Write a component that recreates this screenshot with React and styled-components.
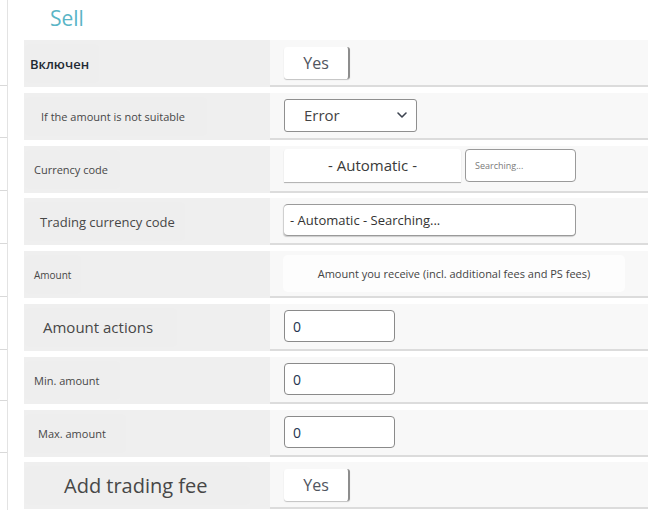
import React from 'react';
import styled, { createGlobalStyle } from 'styled-components';
import { ChevronDown } from 'lucide-react';

const GlobalStyle = createGlobalStyle`
  body {
    margin: 0;
    background: #ffffff;
    font-family: "Open Sans", "Noto Sans", sans-serif;
    color: #444;
  }
`;

const Page = styled.div`
  display: flex;
  width: 648px;
  height: 510px;
  overflow: hidden;
`;

const Rail = styled.div`
  width: 7px;
  flex-shrink: 0;
  border-right: 1px solid #e3e3e3;
  display: flex;
  flex-direction: column;
  margin-right: 16px;
`;

const RailSeg = styled.div`
  height: ${(p) => p.$h}px;
  flex-shrink: 0;
  border-bottom: 1px solid #d9d9d9;
`;

const Main = styled.div`
  flex: 1;
  display: flex;
  flex-direction: column;
`;

const Title = styled.h1`
  margin: 0;
  height: 40px;
  padding-left: 26px;
  font-size: 21px;
  font-weight: 400;
  line-height: 36px;
  color: #5ab5c6;
`;

const Rows = styled.div`
  display: flex;
  flex-direction: column;
  gap: 5.8px;
`;

const Row = styled.div`
  display: grid;
  grid-template-columns: 246px 1fr;
  height: 47px;
`;

const LabelCell = styled.div`
  background: #efefef;
  display: flex;
  align-items: center;
  padding: 4px 0 4px 1px;
`;

const LabelBox = styled.div`
  height: 100%;
  display: flex;
  align-items: center;
  padding: 0 ${(p) => p.$pad}px 0 ${(p) => p.$indent}px;
  background: #eeeeee;
  border-radius: 4px;
  font-size: ${(p) => p.$size}px;
  font-weight: ${(p) => (p.$bold ? 600 : 400)};
  color: ${(p) => (p.$bold ? '#1f2a33' : '#474747')};
  white-space: nowrap;
`;

const ValueCell = styled.div`
  background: #f8f8f8;
  border-bottom: 2px solid #dcdcdc;
  display: flex;
  align-items: center;
  padding-left: ${(p) => p.$pad ?? 14}px;
`;

const Toggle = styled.button`
  width: 66px;
  height: 32px;
  background: #fff;
  border: none;
  border-right: 2px solid #8d8d8d;
  border-radius: 3px;
  box-shadow: 0 1px 1px rgba(0, 0, 0, 0.22);
  font-family: inherit;
  font-size: 16px;
  color: #505560;
  padding: 0;
`;

const Select = styled.div`
  width: 133px;
  height: 33px;
  box-sizing: border-box;
  background: #fff;
  border: 1px solid #8f8f8f;
  border-radius: 3px;
  display: flex;
  align-items: center;
  justify-content: space-between;
  padding: 0 6px 0 19px;
  font-size: 15px;
  color: #444;
`;

const Combo = styled.div`
  display: flex;
  align-items: stretch;
  height: 33px;
  margin-top: ${(p) => p.$top || 0}px;
`;

const ComboMain = styled.div`
  width: 177px;
  background: #fff;
  border-radius: 3px 3px 0 0;
  box-shadow: 0 1px 1px rgba(0, 0, 0, 0.3);
  display: flex;
  align-items: center;
  justify-content: center;
  font-size: 15px;
  color: #3a3a3a;
`;

const ComboSearch = styled.div`
  width: 111px;
  margin-left: 4px;
  box-sizing: border-box;
  background: #fff;
  border: 1px solid #9a9a9a;
  border-radius: 4px;
  display: flex;
  align-items: center;
  padding-left: 9px;
  font-size: 9px;
  color: #7a7a7a;
`;

const Wide = styled.div`
  width: 292px;
  height: 32px;
  box-sizing: border-box;
  background: #fff;
  border: 1px solid #9a9a9a;
  border-left: none;
  border-radius: 4px;
  box-shadow: -1px 1px 1px rgba(0, 0, 0, 0.18);
  display: flex;
  align-items: center;
  padding-left: 6px;
  font-size: 13px;
  color: #333;
  margin-top: -2px;
`;

const Note = styled.div`
  width: 342px;
  height: 37px;
  background: #fdfdfd;
  border-radius: 5px;
  display: flex;
  align-items: center;
  justify-content: center;
  font-size: 11px;
  color: #444;
`;

const NumberInput = styled.div`
  width: 111px;
  height: 32px;
  box-sizing: border-box;
  background: #fff;
  border: 1px solid #8a8a8a;
  border-radius: 4px;
  display: flex;
  align-items: center;
  padding-left: 8px;
  font-size: 14px;
  color: #23344f;
`;

const railSegs = [85, 51, 52, 52, 52, 52, 50, 51];

const labels = [
  { text: 'Включен', size: 13, indent: 5, pad: 10, bold: true },
  { text: 'If the amount is not suitable', size: 11, indent: 16, pad: 22 },
  { text: 'Currency code', size: 11, indent: 9, pad: 12 },
  { text: 'Trading currency code', size: 13, indent: 15, pad: 10 },
  { text: 'Amount', size: 10, indent: 9, pad: 10 },
  { text: 'Amount actions', size: 15, indent: 18, pad: 24 },
  { text: 'Min. amount', size: 11, indent: 9, pad: 20 },
  { text: 'Max. amount', size: 11, indent: 13, pad: 20 },
  { text: 'Add trading fee', size: 20, indent: 39, pad: 42 },
];

const values = [
  <Toggle key="v0">Yes</Toggle>,
  <Select key="v1">
    Error
    <ChevronDown size={16} strokeWidth={2.4} color="#3d4450" />
  </Select>,
  <Combo key="v2" $top={-6}>
    <ComboMain>- Automatic -</ComboMain>
    <ComboSearch>Searching...</ComboSearch>
  </Combo>,
  <Wide key="v3">- Automatic - Searching...</Wide>,
  <Note key="v4">Amount you receive (incl. additional fees and PS fees)</Note>,
  <NumberInput key="v5">0</NumberInput>,
  <NumberInput key="v6">0</NumberInput>,
  <NumberInput key="v7">0</NumberInput>,
  <Toggle key="v8">Yes</Toggle>,
];

export default function App() {
  return (
    <>
      <GlobalStyle />
      <Page>
        <Rail>
          {railSegs.map((h, i) => (
            <RailSeg key={i} $h={h} />
          ))}
        </Rail>
        <Main>
          <Title>Sell</Title>
          <Rows>
            {labels.map((l, i) => (
              <Row key={l.text}>
                <LabelCell>
                  <LabelBox $size={l.size} $indent={l.indent} $pad={l.pad} $bold={l.bold}>
                    {l.text}
                  </LabelBox>
                </LabelCell>
                <ValueCell $pad={i === 4 ? 13 : 14}>{values[i]}</ValueCell>
              </Row>
            ))}
          </Rows>
        </Main>
      </Page>
    </>
  );
}
